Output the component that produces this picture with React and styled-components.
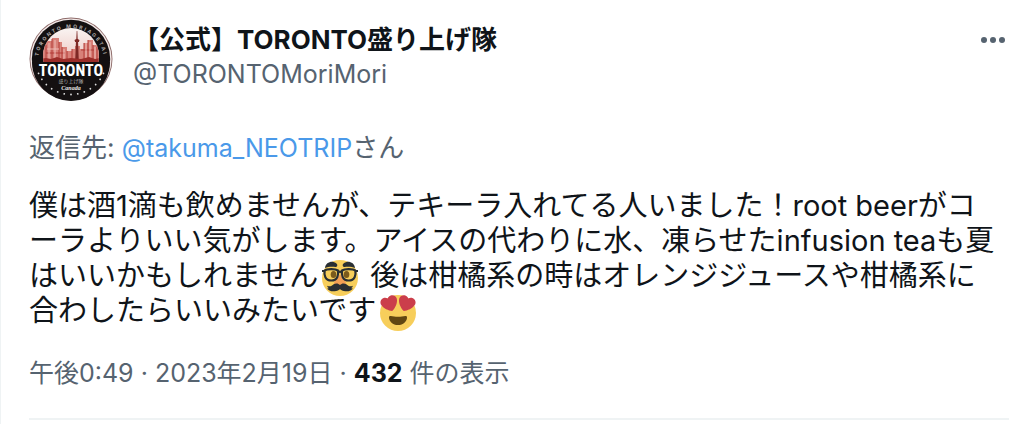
import React from 'react';
import styled, { createGlobalStyle } from 'styled-components';

const GlobalStyle = createGlobalStyle`
  * {
    box-sizing: border-box;
  }
  body {
    margin: 0;
    background: #fff;
    color: #0f1419;
    font-family: Inter, "Noto Sans CJK JP", sans-serif;
  }
`;

const Tweet = styled.article`
  border-left: 1px solid #eff3f4;
  padding: 17px 15px 4px 28px;
`;

const Header = styled.header`
  display: flex;
  align-items: flex-start;
  gap: 20px;
`;

const AvatarLink = styled.a`
  display: block;
  flex: none;
  width: 84px;
  height: 84px;
  svg {
    display: block;
  }
`;

const Author = styled.div`
  flex: 1;
  min-width: 0;
  padding-top: 5px;
  line-height: 35px;
`;

const Name = styled.div`
  font-size: 26px;
  font-weight: 700;
`;

const Handle = styled.div`
  color: #566370;
  font-size: 25px;
`;

const MoreButton = styled.button`
  display: flex;
  margin-top: 8px;
  padding: 0;
  border: 0;
  background: none;
  color: #566370;
  cursor: pointer;
`;

const Reply = styled.p`
  margin: 29px 0 0;
  color: #566370;
  font-size: 26px;
  line-height: 35px;
`;

const Mention = styled.a`
  color: #4a99e9;
  font-size: 25px;
  text-decoration: none;
`;

const Body = styled.p`
  margin: 22px 0 0;
  font-size: 29px;
  line-height: 35px;
`;

const Emoji = styled.svg`
  width: 36px;
  height: 36px;
  margin: -4px 4px;
  vertical-align: -6px;
`;

const Meta = styled.p`
  margin: 28px 0 0;
  padding-bottom: 27px;
  border-bottom: 2px solid #eff3f4;
  color: #566370;
  font-size: 25px;
  line-height: 35px;
`;

const Count = styled.strong`
  color: #0f1419;
  font-weight: 700;
`;

const stars = [-66, -55, -44, -33, -22, -11, 0, 11, 22, 33, 44, 55, 66];

const Avatar = () => (
  <svg width="84" height="84" viewBox="0 0 84 84" role="img" aria-label="TORONTO">
    <defs>
      <path id="rim" d="M9 44A33 33 0 0 1 75 44" />
      <clipPath id="window">
        <circle cx="42" cy="39" r="28" />
      </clipPath>
      <linearGradient id="sky" x1="0" y1="0" x2="0" y2="1">
        <stop offset="0" stopColor="#faf5f3" />
        <stop offset="1" stopColor="#ecc3be" />
      </linearGradient>
    </defs>
    <circle cx="42" cy="42" r="41.5" fill="#8d6a68" />
    <circle cx="42" cy="42" r="40.6" fill="#f3e9e8" />
    <circle cx="42" cy="42" r="39.2" fill="#141011" />
    <g clipPath="url(#window)">
      <rect x="12" y="10" width="60" height="38" fill="url(#sky)" />
      <path d="M12 47V30l5-2v-4h6v-3h7v4h3v5h5v4h5v-2h3v-3h5v3h4v-6h4v-3h5v5h4l6 4v15z" fill="#d88078" />
      <path d="M17 28v17M23 22v22M30 25v20M33 30v15M38 34v11M43 32v12M55 26v18M59 23v21M64 28v17M68 30v15M17 36h19M52 33h13" fill="none" stroke="#b23b36" />
      <path d="M20 26v18M26 23v20M35 32v11M57 26v18M61 25v18M66 30v13M18 32h12" fill="none" stroke="#efbdb7" />
      <path d="M47.700 14h.6l.4 8 1.800 1-.6 2h-.8l.7 19h-3.600l.7-19h-.8l-.6-2 1.800-1z" fill="#7e2825" />
      <path d="M12 42l5-1 5 1 6-2 6 2 8-1 10 1 8-2 6 2 6-1v8H12z" fill="#9c2d29" />
    </g>
    <path d="M3 45h78A39 39 0 0 1 3 45z" fill="#141011" />
    <text fill="#b5b0b0" fontSize="5" fontWeight="700" letterSpacing="2">
      <textPath href="#rim" startOffset="50%" textAnchor="middle">TORONTO MORIAGETAI</textPath>
    </text>
    <text x="42" y="59" fill="#fff" fontFamily="Liberation Sans Narrow, Roboto Condensed, Open Sans, sans-serif" fontSize="16" fontWeight="700" textAnchor="middle">TORONTO</text>
    <text x="42" y="66" fill="#aaa" fontSize="5" textAnchor="middle">盛り上げ隊</text>
    <text x="42" y="73" fill="#eee" fontFamily="Liberation Serif, serif" fontSize="6" fontStyle="italic" fontWeight="700" textAnchor="middle">Canada</text>
    {stars.map(angle => (
      <circle key={angle} cx="42" cy="77.500" r="0.9" fill="#ddd" transform={`rotate(${angle} 42 42)`} />
    ))}
  </svg>
);

const DisguisedFace = () => (
  <Emoji viewBox="0 0 36 36" role="img" aria-label="🥸">
    <circle cx="18" cy="18" r="18" fill="#f7ce5b" />
    <ellipse cx="11.500" cy="14.500" rx="2.800" ry="3.600" fill="#7a5a1c" />
    <ellipse cx="24.500" cy="14.500" rx="2.800" ry="3.600" fill="#7a5a1c" />
    <path d="M16 16c-.3 3-4 4.500-4 7.500 0 2.200 3.300 2.500 6 2.500s6-.3 6-2.500c0-3-3.700-4.500-4-7.500-.5-1.500-3.500-1.500-4 0z" fill="#f19f55" />
    <path d="M3 8C3.500 3.500 7.500 1.300 11.500 2c3 .5 4.300 2.500 3.700 4-.7 1.600-2.700.8-5 .8C7 6.800 5 7.200 3 8zM33 8c-.5-4.500-4.500-6.700-8.500-6-3 .5-4.300 2.500-3.700 4 .7 1.600 2.700.8 5 .8C29 6.800 31 7.200 33 8z" fill="#292f33" />
    <g fill="none" stroke="#292f33" strokeWidth="2.200">
      <path d="M2.700 10.500c2-1.700 10.600-1.900 13.200 0 .9 4.500-.5 10-6.600 10S1.800 15 2.700 10.500zM33.300 10.500c-2-1.700-10.600-1.900-13.200 0-.9 4.500.5 10 6.600 10s7.500-5.500 6.600-10z" />
      <path d="M15.800 12.500c1.400-1.200 3-1.200 4.400 0M0 11h3M33 11h3" />
    </g>
    <path d="M18 25c-1.600-2-4.600-2-6.300-.7-1.900 1.400-3.700 2.900-6.500 1.500.1 1.300.8 2 1.700 2.300-.6.400-1.200.400-1.900.1 1.200 2.500 5.300 3.800 9.100 2.800 1.600-.4 3.100-1.100 3.900-2 .8.900 2.300 1.600 3.900 2 3.800 1 7.900-.3 9.100-2.800-.7.300-1.300.3-1.900-.1.900-.3 1.600-1 1.700-2.300-2.800 1.400-4.600-.1-6.500-1.500-1.700-1.300-4.700-1.300-6.300.7z" fill="#292f33" />
  </Emoji>
);

const HeartEyes = () => (
  <Emoji viewBox="0 0 36 36" role="img" aria-label="😍">
    <circle cx="18" cy="18" r="18" fill="#f7ce5b" />
    <path d="M18 21.849c-2.966 0-4.935-.346-7.369-.819-.557-.106-1.638 0-1.638 1.638 0 3.275 3.763 7.369 9.007 7.369s9.007-4.094 9.007-7.369c0-1.638-1.082-1.745-1.638-1.638-2.434.473-4.402.819-7.369.819" fill="#614712" />
    <path d="M16.650 3.281C15.791.850 13.126-.426 10.694.431c-1.476.520-2.521 1.711-2.928 3.104-1.191-.829-2.751-1.100-4.225-.580C1.111 3.813-.167 6.480.692 8.911c.122.344.284.663.472.958 1.951 3.582 7.588 6.100 11.001 6.131 2.637-2.167 5.446-7.665 4.718-11.677-.038-.348-.113-.698-.233-1.042zM19.350 3.281C20.209.850 22.875-.426 25.306.431c1.476.520 2.521 1.711 2.929 3.104 1.191-.829 2.751-1.100 4.225-.580 2.430.858 3.707 3.525 2.850 5.956-.123.344-.284.663-.473.958-1.951 3.582-7.588 6.100-11.002 6.131-2.637-2.167-5.445-7.665-4.717-11.677.037-.348.112-.698.232-1.042z" fill="#cb3e4b" />
  </Emoji>
);

const App = () => (
  <React.Fragment>
    <GlobalStyle />
    <Tweet lang="ja">
      <Header>
        <AvatarLink href="#profile">
          <Avatar />
        </AvatarLink>
        <Author>
          <Name>【公式】TORONTO盛り上げ隊</Name>
          <Handle>@TORONTOMoriMori</Handle>
        </Author>
        <MoreButton type="button" aria-label="もっと見る">
          <svg width="32" height="30" viewBox="0 0 32 30" fill="currentColor">
            <circle cx="7" cy="15" r="3" />
            <circle cx="16" cy="15" r="3" />
            <circle cx="25" cy="15" r="3" />
          </svg>
        </MoreButton>
      </Header>
      <Reply>
        返信先: <Mention href="#takuma_NEOTRIP">@takuma_NEOTRIP</Mention>さん
      </Reply>
      <Body>
        僕は酒1滴も飲めませんが、テキーラ入れてる人いました！root beerがコ
        <br />
        ーラよりいい気がします。アイスの代わりに水、凍らせたinfusion teaも夏
        <br />
        はいいかもしれません
        <DisguisedFace />
        {' '}
        後は柑橘系の時はオレンジジュースや柑橘系に
        <br />
        合わしたらいいみたいです
        <HeartEyes />
      </Body>
      <Meta>
        午後0:49 · 2023年2月19日 · <Count>432</Count> 件の表示
      </Meta>
    </Tweet>
  </React.Fragment>
);

export default App;
